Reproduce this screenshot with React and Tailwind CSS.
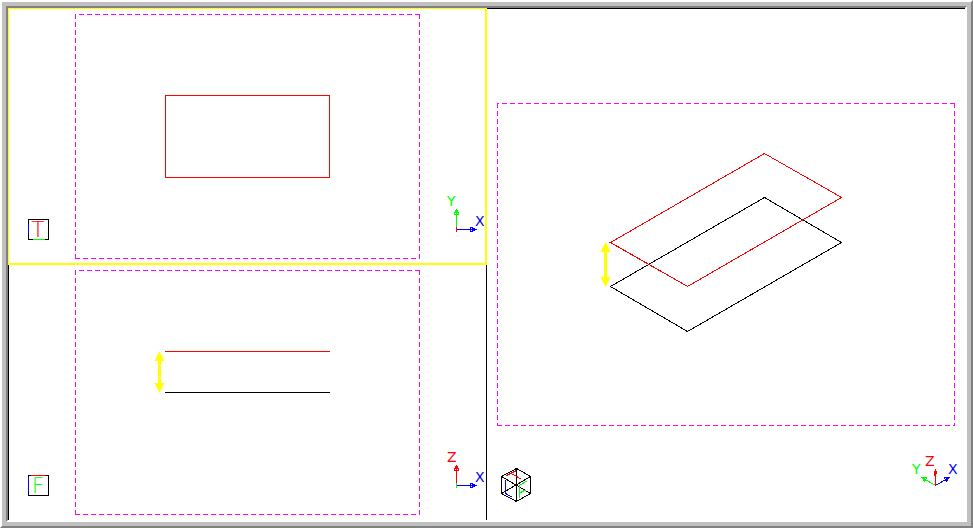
const COLORS = {
	x: "#0000ff",
	y: "#00ff00",
	z: "#ff0000",
};

// dashed sheet limits of a view
function Limits({ left, top, right, bottom }) {
	const d = [
		`M${right + 1} ${top + 0.5}H${left}`,
		`M${left + 0.5} ${top}V${bottom + 1}`,
		`M${right + 0.5} ${top}V${bottom + 1}`,
		`M${left} ${bottom + 0.5}H${right + 1}`,
	].join("");
	return (
		<path
			d={d}
			fill="none"
			stroke="#ff00ff"
			strokeDasharray="5 3"
			shapeRendering="crispEdges"
		/>
	);
}

function AxisLabel({ axis, x, y }) {
	return (
		<text x={x} y={y} fill={COLORS[axis]} className="font-['DejaVu_Sans',sans-serif] text-[14px]">
			{axis.toUpperCase()}
		</text>
	);
}

// two headed arrow which shows the offset between the profiles
function HeightArrow({ x, top, bottom }) {
	return (
		<g fill="#ffff00">
			<path d={`M${x} ${top}l5 10h-10z`} />
			<path d={`M${x} ${bottom + 1}l5 -10h-10z`} />
			<path d={`M${x} ${top + 9}V${bottom - 9}`} stroke="#ffff00" strokeWidth="3" />
		</g>
	);
}

// flat axis marker for the top and front views
function FlatAxes({ x, y, up, normal }) {
	return (
		<g>
			<g
				transform={`translate(${x} ${y})`}
				fill="none"
				shapeRendering="crispEdges"
			>
				<path d="M1 .5H21M14.5 -2V3M14 -1.5H17M14 2.5H17M16 -.5H19M16 1.5H19" stroke={COLORS.x} />
				<path
					d="M.5 0V-20M-2 -14.5H3M-1.5 -14V-17M2.5 -14V-17M-.5 -16V-19M1.5 -16V-19"
					stroke={COLORS[up]}
				/>
				<path d="M.5 -2V3" stroke={COLORS[normal]} />
			</g>
			<AxisLabel axis={up} x={x - 9} y={y - 23} />
			<AxisLabel axis="x" x={x + 19} y={y - 3} />
		</g>
	);
}

function ViewBadge({ x, y, letter, color, edges }) {
	return (
		<g>
			<g transform={`translate(${x} ${y})`} fill="none" shapeRendering="crispEdges">
				<rect x=".5" y=".5" width="20" height="20" stroke="#000000" />
				{edges.map((edge) => (
					<path key={edge.d} d={edge.d} stroke={edge.color} />
				))}
			</g>
			<text
				x={x + 10}
				y={y + 18}
				fill={color}
				textAnchor="middle"
				className="font-['DejaVu_Sans',sans-serif] text-[22px] font-extralight"
			>
				{letter}
			</text>
		</g>
	);
}

function IsoAxes() {
	return (
		<g>
			<g fill="none" shapeRendering="crispEdges">
				<path
					d="M935.5 485.5L950 477M944 477.5H950M944.5 478L947 482M949.5 477L946.5 481.5M945 479.5H948"
					stroke={COLORS.x}
				/>
				<path
					d="M935.5 485.5L921 477M921 477.5H927M921.5 477L924.5 481.5M926.5 478L924 482M923 479.5H926"
					stroke={COLORS.y}
				/>
				<path d="M935.5 486V469M934.5 476V471M936.5 474V471" stroke={COLORS.z} />
			</g>
			<AxisLabel axis="y" x={912} y={474} />
			<AxisLabel axis="z" x={925} y={466} />
			<AxisLabel axis="x" x={948} y={474} />
		</g>
	);
}

function IsoCube() {
	return (
		<g fill="none" shapeRendering="crispEdges">
			<path
				d="M516.5 468.5L530.5 476.5V493.5L516.5 501.5L501.5 493.5V476.5ZM516.5 468.5V501.5M501.5 476.5L530.5 493.5M530.5 476.5L501.5 493.5"
				stroke="#000000"
			/>
			<path d="M506.5 475.5L516.5 470.5M510.5 473L521 479" stroke={COLORS.z} />
			<path d="M505.5 480V493.5L511.5 497" stroke={COLORS.x} />
			<path d="M519.5 498V485.5L527.5 480.5M519.5 493L525.5 490" stroke={COLORS.y} />
		</g>
	);
}

function TopView() {
	return (
		<svg viewBox="9 9 476 254" className="block h-full w-full" role="img" aria-label="Top view">
			<Limits left={75} top={14} right={419} bottom={258} />
			<rect
				x="165.5"
				y="95.5"
				width="164"
				height="82"
				fill="none"
				stroke="#ff0000"
				shapeRendering="crispEdges"
			/>
			<ViewBadge
				x={28}
				y={219}
				letter="T"
				color={COLORS.z}
				edges={[
					{ d: "M.5 5V15", color: COLORS.x },
					{ d: "M5 20.5H17", color: COLORS.y },
				]}
			/>
			<FlatAxes x={456} y={229} up="y" normal="z" />
		</svg>
	);
}

function FrontView() {
	return (
		<svg viewBox="9 265 477 255" className="block h-full w-full" role="img" aria-label="Front view">
			<Limits left={75} top={270} right={419} bottom={514} />
			<g shapeRendering="crispEdges">
				<path d="M165 351.5H330" stroke="#ff0000" />
				<path d="M165 392.5H330" stroke="#000000" />
			</g>
			<HeightArrow x={159.5} top={351} bottom={392} />
			<ViewBadge
				x={28}
				y={475}
				letter="F"
				color={COLORS.y}
				edges={[
					{ d: "M3 .5H18", color: COLORS.z },
					{ d: "M.5 2V17", color: COLORS.x },
				]}
			/>
			<FlatAxes x={456} y={485} up="z" normal="y" />
		</svg>
	);
}

function IsoView() {
	return (
		<svg viewBox="487 9 478 511" className="block h-full w-full" role="img" aria-label="Isometric view">
			<Limits left={497} top={103} right={954} bottom={425} />
			<g fill="none" shapeRendering="crispEdges">
				<path d="M610.5 286.5L764.5 197.5L841.5 242.5L687.5 331.5Z" stroke="#000000" />
				<path d="M610.5 242.5L764.5 153.5L841.5 197.5L687.5 286.5Z" stroke="#ff0000" />
			</g>
			<HeightArrow x={605.5} top={242} bottom={286} />
			<IsoCube />
			<IsoAxes />
		</svg>
	);
}

export default function App() {
	return (
		<div className="h-screen w-full border-2 border-t-white border-l-white border-r-[#808080] border-b-[#808080] bg-[#c0c0c0] p-1">
			<main className="grid h-full grid-cols-[479fr_478fr] border-2 border-t-[#808080] border-l-[#808080] border-r-white border-b-white bg-white">
				<div className="grid min-h-0 grid-rows-[257fr_255fr]">
					<section className="min-h-0 border-t border-r-2 border-b-2 border-l border-[#ffff00]">
						<TopView />
					</section>
					<section className="min-h-0 border-r border-l border-black">
						<FrontView />
					</section>
				</div>
				<section className="min-h-0 border-t border-black">
					<IsoView />
				</section>
			</main>
		</div>
	);
}
